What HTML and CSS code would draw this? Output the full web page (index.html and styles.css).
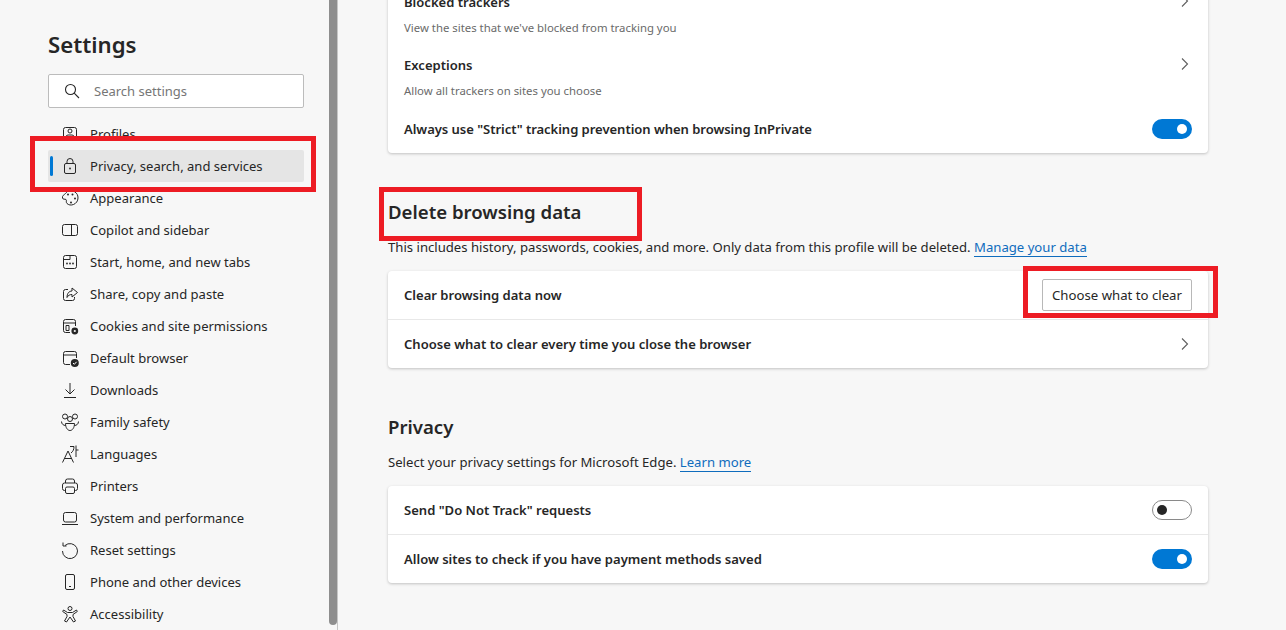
FILE: index.html
```html
<!DOCTYPE html>
<html lang="en">
<head>
<meta charset="utf-8">
<title>Settings</title>
<link rel="stylesheet" href="styles.css">
</head>
<body>
<div class="page">
  <aside class="sidebar">
    <h1 class="side-title">Settings</h1>
    <div class="search">
      <svg class="search-icon" viewBox="0 0 16 16"><circle cx="6.5" cy="6.5" r="5"/><path d="M10.2 10.2 15 15"/></svg>
      <span class="search-text">Search settings</span>
    </div>
    <nav class="nav">
      <a class="nav-item"><svg class="ico" viewBox="0 0 20 20"><rect x="3.500" y="3.500" width="13" height="13" rx="2"/><circle cx="10" cy="7" r="2"/><path d="M6 16v-3a2 2 0 0 1 2-2h4a2 2 0 0 1 2 2v3"/></svg><span>Profiles</span></a>
      <a class="nav-item active"><svg class="ico" viewBox="0 0 20 20"><rect x="4.500" y="7.500" width="11" height="10" rx="1.500"/><path d="M7 7.500V5.500a3 3 0 0 1 6 0v2"/><circle class="fill" cx="10" cy="12.500" r=".9"/></svg><span>Privacy, search, and services</span></a>
      <a class="nav-item"><svg class="ico" viewBox="0 0 20 20"><path d="M10 2.500c-2 0-3 1.500-4.500 3S2 7.500 2.500 10c.4 1.800 2.500.8 3.500 1.500s-.5 2.500 1 4 4 2 6.500 1 4.500-3.500 4.500-6.500-1-4.500-3-6-3-1.500-5-1.500z"/><circle class="fill" cx="8" cy="6.500" r="1"/><circle class="fill" cx="12.500" cy="6.500" r="1"/><circle class="fill" cx="15" cy="10.500" r="1"/><circle class="fill" cx="11" cy="14.500" r="1"/></svg><span>Appearance</span></a>
      <a class="nav-item"><svg class="ico" viewBox="0 0 20 20"><rect x="2.500" y="4.500" width="15" height="11" rx="2"/><path d="M11.500 4.500v11"/></svg><span>Copilot and sidebar</span></a>
      <a class="nav-item"><svg class="ico" viewBox="0 0 20 20"><rect x="3.500" y="3.500" width="13" height="13" rx="2"/><path d="M3.500 7.500h6.500v-4"/><circle class="fill" cx="7" cy="11.500" r=".9"/><circle class="fill" cx="10" cy="11.500" r=".9"/><circle class="fill" cx="13" cy="11.500" r=".9"/></svg><span>Start, home, and new tabs</span></a>
      <a class="nav-item"><svg class="ico" viewBox="0 0 20 20"><path d="M8 5.500H5.500a2 2 0 0 0-2 2v7a2 2 0 0 0 2 2h7a2 2 0 0 0 2-2V13"/><path d="M12 4l5.500 4.500L12 13v-2.500c-2.500 0-4 1-5 3 0-4 2-6.500 5-6.500z"/></svg><span>Share, copy and paste</span></a>
      <a class="nav-item"><svg class="ico" viewBox="0 0 20 20"><path d="M10 16.500H5.500a2 2 0 0 1-2-2v-9a2 2 0 0 1 2-2h8a2 2 0 0 1 2 2V10"/><path d="M3.500 7h12M6 9.500h3v5H6z"/><circle class="fill" cx="14.800" cy="15" r="3.400"/><circle class="hole" cx="14.800" cy="15" r="1.100"/></svg><span>Cookies and site permissions</span></a>
      <a class="nav-item"><svg class="ico" viewBox="0 0 20 20"><path d="M10 16.500H5.500a2 2 0 0 1-2-2v-9a2 2 0 0 1 2-2h9a2 2 0 0 1 2 2V10"/><path d="M3.500 7h13"/><circle class="fill" cx="14.800" cy="15" r="4"/><path class="check" d="M13 15l1.300 1.300 2.300-2.500"/></svg><span>Default browser</span></a>
      <a class="nav-item"><svg class="ico" viewBox="0 0 20 20"><path d="M10 3v11M5.500 9.500 10 14l4.500-4.500M4 17.500h12"/></svg><span>Downloads</span></a>
      <a class="nav-item"><svg class="ico" viewBox="0 0 20 20"><circle cx="5" cy="4.500" r="2.500"/><circle cx="15" cy="4.500" r="2.500"/><circle cx="10" cy="7" r="2.500"/><path d="M1.500 9.500c0 2.500 2 4 4 4M18.500 9.500c0 2.500-2 4-4 4M5.500 11.500h9c0 4-2 7-4.500 7s-4.500-3-4.500-7z"/></svg><span>Family safety</span></a>
      <a class="nav-item"><svg class="ico" viewBox="0 0 20 20"><path d="M2.500 18.500 8 7l5.500 11.500M4.500 14.500h7M10 2.500h4c0 3-1 5-3 6.500M16 1.500V13M16 6h2.500"/></svg><span>Languages</span></a>
      <a class="nav-item"><svg class="ico" viewBox="0 0 20 20"><path d="M5.500 7V5a2 2 0 0 1 2-2h5a2 2 0 0 1 2 2v2"/><path d="M5.500 14.500H4.500a2 2 0 0 1-2-2V9a2 2 0 0 1 2-2h11a2 2 0 0 1 2 2v3.500a2 2 0 0 1-2 2h-1"/><rect x="5.500" y="11" width="9" height="6.500" rx="1.500"/></svg><span>Printers</span></a>
      <a class="nav-item"><svg class="ico" viewBox="0 0 20 20"><rect x="3.500" y="4.500" width="13" height="9.500" rx="2"/><path d="M2 16.500h16"/></svg><span>System and performance</span></a>
      <a class="nav-item"><svg class="ico" viewBox="0 0 20 20"><path d="M5 5.500a7.500 7.500 0 1 1-2.500 5.500"/><path d="M3 2.500v3.500h3.500"/></svg><span>Reset settings</span></a>
      <a class="nav-item"><svg class="ico" viewBox="0 0 20 20"><rect x="5.500" y="2.500" width="9" height="15" rx="1.500"/><path d="M9 14.500h2"/></svg><span>Phone and other devices</span></a>
      <a class="nav-item"><svg class="ico" viewBox="0 0 20 20"><circle cx="10" cy="4.500" r="2"/><path d="M3.500 6 7.500 8.500h5L16.500 6l.8 1.500L13 10.500v2l2.500 4.500-2 1-3.500-5-3.500 5-2-1L7 12.500v-2L2.700 7.500z"/></svg><span>Accessibility</span></a>
    </nav>
  </aside>
  <div class="scrollbar"></div>
  <main class="main">
    <section class="card card-first">
      <div class="row tall">
        <div class="row-text"><div class="row-title">Blocked trackers</div><div class="row-sub">View the sites that we've blocked from tracking you</div></div>
        <svg class="chev" viewBox="0 0 8 12"><path d="M1 .5 6.500 6 1 11.500"/></svg>
      </div>
      <div class="row tall">
        <div class="row-text"><div class="row-title">Exceptions</div><div class="row-sub">Allow all trackers on sites you choose</div></div>
        <svg class="chev" viewBox="0 0 8 12"><path d="M1 .5 6.500 6 1 11.500"/></svg>
      </div>
      <div class="row closing">
        <div class="row-title">Always use "Strict" tracking prevention when browsing InPrivate</div>
        <span class="toggle on"></span>
      </div>
    </section>

    <h2 class="section-title">Delete browsing data</h2>
    <p class="section-desc">This includes history, passwords, cookies, and more. Only data from this profile will be deleted. <a class="link">Manage your data</a></p>
    <section class="card">
      <div class="row divided">
        <div class="row-title">Clear browsing data now</div>
        <button class="btn">Choose what to clear</button>
      </div>
      <div class="row">
        <div class="row-title">Choose what to clear every time you close the browser</div>
        <svg class="chev" viewBox="0 0 8 12"><path d="M1 .5 6.500 6 1 11.500"/></svg>
      </div>
    </section>

    <h2 class="section-title">Privacy</h2>
    <p class="section-desc">Select your privacy settings for Microsoft Edge. <a class="link">Learn more</a></p>
    <section class="card">
      <div class="row divided">
        <div class="row-title">Send "Do Not Track" requests</div>
        <span class="toggle"></span>
      </div>
      <div class="row">
        <div class="row-title">Allow sites to check if you have payment methods saved</div>
        <span class="toggle on"></span>
      </div>
    </section>
  </main>
</div>
<div class="mark mark-nav"></div>
<div class="mark mark-head"></div>
<div class="mark mark-btn"></div>
</body>
</html>
```
FILE: styles.css
```css
* { box-sizing: border-box; }
html, body { margin: 0; height: 100%; overflow: hidden; }
body {
  background: #f7f7f7;
  color: #262626;
  font-family: "Noto Sans", "Open Sans", sans-serif;
  font-size: 13px;
  line-height: 20px;
}
.page { display: flex; height: 630px; overflow: hidden; }

.sidebar { width: 329px; flex: none; padding: 30px 25px 0 48px; }
.side-title { margin: 0; font-size: 22.2px; line-height: 30px; font-weight: 600; }
.search {
  display: flex; align-items: center; gap: 14px;
  height: 34px; margin-top: 14px; padding-left: 15px;
  background: #fff; border: 1px solid #bcbcbc; border-radius: 2px;
}
.search-icon { width: 16px; height: 16px; fill: none; stroke: #262626; stroke-width: 1.100; }
.search-text { color: #767676; }
.nav { margin-top: 10px; font-size: 13.04px; }
.nav-item {
  position: relative; display: flex; align-items: center; gap: 10px;
  height: 32px; padding-left: 12px; border-radius: 2px;
}
.nav-item.active { background: #e5e5e5; }
.nav-item.active::before {
  content: ""; position: absolute; left: 2px; top: 6px;
  width: 3px; height: 20px; background: #0078d4; border-radius: 2px;
}
.ico { width: 20px; height: 20px; flex: none; fill: none; stroke: #262626; stroke-width: 1; }
.ico .fill { fill: #262626; stroke: none; }
.ico .hole { fill: #f7f7f7; stroke: none; }
.ico .check { stroke: #fff; }

.scrollbar { width: 8px; height: 625px; flex: none; background: #8e8e8e; border-radius: 0 0 4px 4px; }

.main { flex: 1; padding-left: 50px; border-left: 1px solid #c6c6c6; }
.main > * { width: 820px; }
.card {
  background: #fff; border-radius: 4px;
  box-shadow: 0 1px 3px rgba(0, 0, 0, .22);
}
.card-first { margin-top: -17px; }
.row {
  display: flex; align-items: center; justify-content: space-between;
  min-height: 48px; padding: 0 16px;
}
.row.divided { height: 49px; border-bottom: 1px solid #e8e8e8; }
.row.tall { height: 63px; padding-top: 9px; align-items: flex-start; }
.row.closing { height: 44px; min-height: 44px; padding-bottom: 4px; }
.row.closing .row-title { letter-spacing: -.045px; }
.row-title { font-weight: 600; font-size: 13.05px; }
.row-sub { margin-top: 6px; font-size: 11.36px; color: #6a6a6a; }
.chev { width: 8px; height: 12px; margin-right: 3px; fill: none; stroke: #5f5f5f; stroke-width: 1.100; }
.row.tall .chev { margin-top: 3px; }

.toggle {
  display: flex; align-items: center; width: 40px; height: 20px; padding-left: 5px;
  border: 1px solid #8a8a8a; border-radius: 10px; background: #fff;
}
.toggle::after { content: ""; width: 10px; height: 10px; margin-left: -1px; border-radius: 50%; background: #262626; }
.toggle.on { justify-content: flex-end; padding: 0 5px 0 0; background: #0078d4; border: 0; }
.toggle.on::after { margin: 0; background: #fff; }

.section-title { margin: 43px 0 0; font-size: 18.6px; line-height: 32px; font-weight: 600; }
.section-desc { margin: 9px 0 0; font-size: 13.13px; }
.link { color: #0f6cbd; border-bottom: 1px solid #0f6cbd; }
.section-desc + .card { margin-top: 14px; }

.btn {
  width: 150px; height: 32px; padding: 0;
  font: inherit; font-size: 13.2px; color: #262626;
  background: #fff; border: 1px solid #b8b8b8; border-radius: 2px;
}

.mark { position: absolute; border: 5px solid #ed1c24; }
.mark-nav { left: 30px; top: 136px; width: 286px; height: 56px; }
.mark-head { left: 379px; top: 187px; width: 263px; height: 54px; }
.mark-btn { left: 1023px; top: 266px; width: 195px; height: 52px; }
```
